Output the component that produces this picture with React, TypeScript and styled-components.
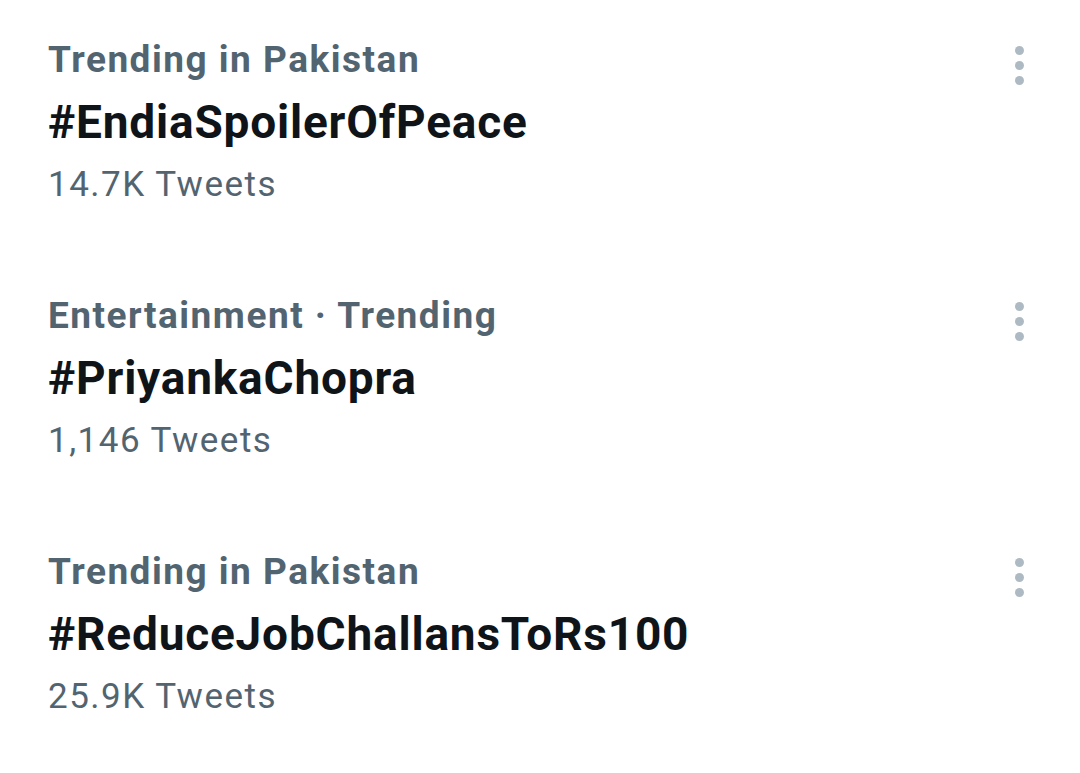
import React from "react";
import styled, { createGlobalStyle } from "styled-components";

const Global = createGlobalStyle`
  html, body { margin: 0; padding: 0; background: #ffffff; }
  body { font-family: Roboto, "Noto Sans", Arial, sans-serif; }
`;

const List = styled.div`
  display: flex;
  flex-direction: column;
  padding: 29px 0 0 48px;
  width: 1080px;
  box-sizing: border-box;
`;

const Row = styled.div`
  display: flex;
  justify-content: space-between;
  align-items: flex-start;
  height: 256px;
`;

const Texts = styled.div`
  display: flex;
  flex-direction: column;
`;

const Category = styled.div`
  font-size: 37px;
  font-weight: 700;
  line-height: 62px;
  letter-spacing: 1.5px;
  color: #536471;
`;

const Title = styled.div`
  font-size: 46px;
  font-weight: 700;
  line-height: 62px;
  letter-spacing: 0.8px;
  color: #0f1419;
`;

const Count = styled.div`
  font-size: 35px;
  font-weight: 400;
  line-height: 62px;
  margin-top: 1px;
  letter-spacing: 1.5px;
  color: #536471;
`;

const Menu = styled.div`
  display: flex;
  flex-direction: column;
  gap: 6px;
  margin-top: 17px;
  margin-right: 56px;
`;

const Dot = styled.span`
  width: 9px;
  height: 9px;
  border-radius: 50%;
  background: #aebac3;
`;

const items = [
  { cat: "Trending in Pakistan", title: "#EndiaSpoilerOfPeace", count: "14.7K Tweets" },
  { cat: "Entertainment · Trending", title: "#PriyankaChopra", count: "1,146 Tweets" },
  { cat: "Trending in Pakistan", title: "#ReduceJobChallansToRs100", count: "25.9K Tweets" },
];

export default function App() {
  return (
    <>
      <Global />
      <List>
        {items.map((it, i) => (
          <Row key={i}>
            <Texts>
              <Category>{it.cat}</Category>
              <Title>{it.title}</Title>
              <Count>{it.count}</Count>
            </Texts>
            <Menu>
              <Dot />
              <Dot />
              <Dot />
            </Menu>
          </Row>
        ))}
      </List>
    </>
  );
}
